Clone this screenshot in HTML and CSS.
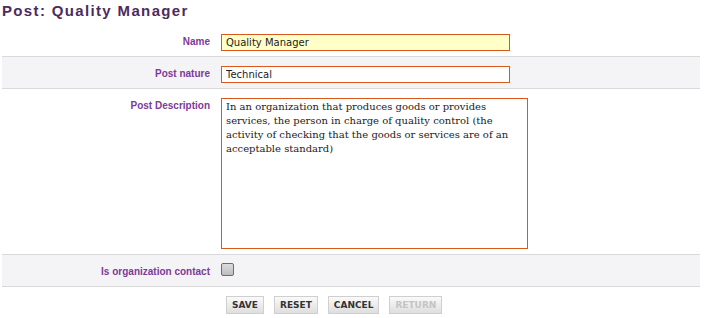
FILE: index.html
```html
<!DOCTYPE html>
<html lang="en">
<head>
<meta charset="UTF-8">
<title>Post: Quality Manager</title>
<link rel="stylesheet" href="styles.css">
</head>
<body>

<div class="page">
  <h1>Post: Quality Manager</h1>

  <form class="form">
    <div class="row">
      <label class="label" for="name">Name</label>
      <div class="field"><input class="text req" id="name" type="text" value="Quality Manager"></div>
    </div>
    <div class="row alt">
      <label class="label" for="nature">Post nature</label>
      <div class="field"><input class="text" id="nature" type="text" value="Technical"></div>
    </div>
    <div class="row">
      <label class="label" for="desc">Post Description</label>
      <div class="field"><textarea class="area" id="desc">In an organization that produces goods or provides services, the person in charge of quality control (the activity of checking that the goods or services are of an acceptable standard)</textarea></div>
    </div>
    <div class="row alt">
      <label class="label" for="contact">Is organization contact</label>
      <div class="field"><span class="check" id="contact"></span></div>
    </div>

    <div class="buttons">
      <button type="button" class="btn">SAVE</button>
      <button type="button" class="btn">RESET</button>
      <button type="button" class="btn">CANCEL</button>
      <button type="button" class="btn" disabled>RETURN</button>
    </div>
  </form>
</div>

</body>
</html>
```

FILE: styles.css
```css
*{box-sizing:border-box}
body{margin:0;background:#fff;font-family:"Liberation Sans",Arial,sans-serif}
.page{width:698px;margin-left:2px}
h1{margin:0;padding-top:2px;height:25px;font-size:15px;font-weight:700;letter-spacing:1.35px;color:#4b2c5e}

.row{display:grid;grid-template-columns:208px 1fr;grid-auto-rows:minmax(17px,auto);column-gap:11px;padding:9px 0 5px;border-bottom:1px solid #d9d9d9}
.row.alt{background:#f4f3f5}
.label{text-align:right;font-size:10px;font-weight:700;color:#7d3a98;padding-top:2px;line-height:12px}

.text,.area{-webkit-appearance:none;appearance:none;border:1px solid #d9581c;border-radius:0;box-shadow:none;outline:none;margin:0;display:block;color:#222}
.text{width:289px;height:17px;padding:0 4px;background:#fff;font-family:"DejaVu Sans",Verdana,sans-serif;font-size:10px}
.text.req{background:#ffffc8}
.area{width:307px;height:151px;padding:1px 4px;resize:none;background:#fff;
  font-family:"DejaVu Serif",Georgia,serif;font-size:10px;line-height:14px}

.check{display:block;width:13px;height:13px;margin-top:-1px;border:1px solid #6e6e6e;border-radius:2px;
  background:linear-gradient(#dcdcdc,#bdbdbd)}

.buttons{display:flex;gap:10px;padding:9px 0 0 224px}
.btn{height:18px;padding:0 5px;border:1px solid #cfcfcf;background:linear-gradient(#fafafa,#dedede);
  font-family:"DejaVu Sans",Verdana,sans-serif;font-size:9px;font-weight:700;color:#333;cursor:pointer}
.btn:disabled{color:#c4c4c4;cursor:default}
```
